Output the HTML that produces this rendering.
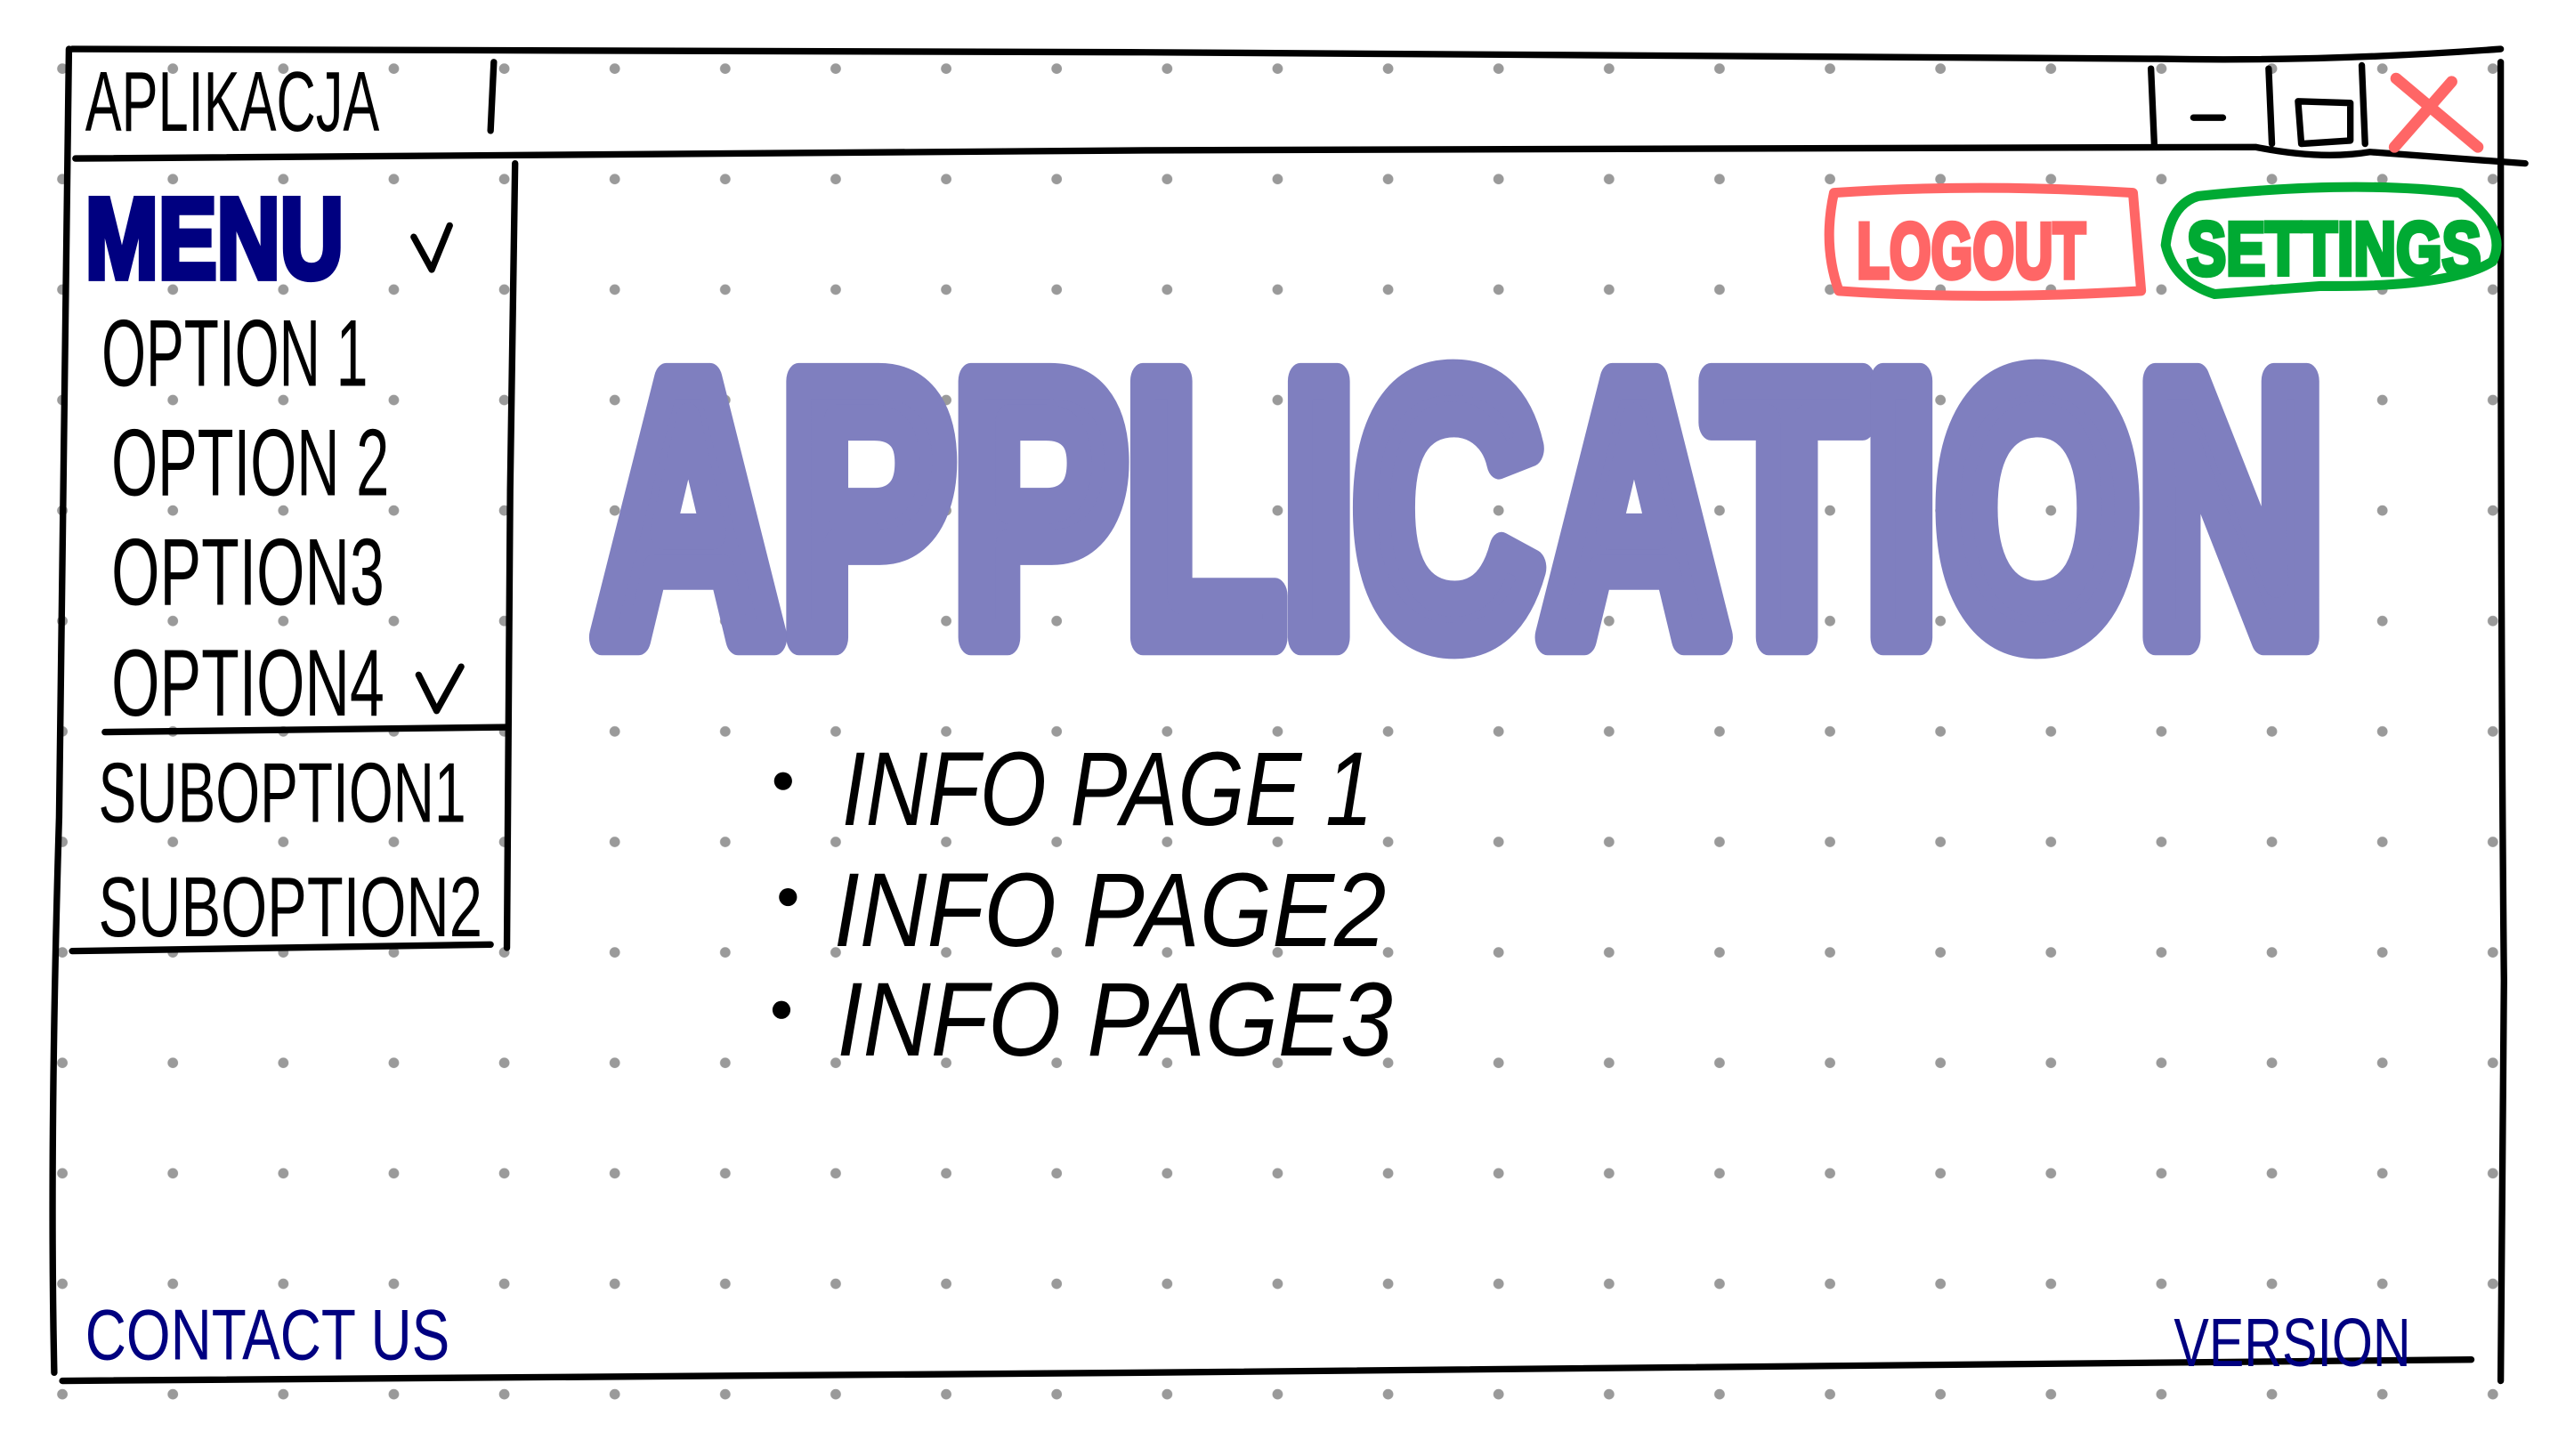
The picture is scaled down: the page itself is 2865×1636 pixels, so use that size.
<!DOCTYPE html>
<html><head><meta charset="utf-8"><style>
html,body{margin:0;padding:0;background:#fff;overflow:hidden}
svg{display:block}
text{font-family:"Liberation Sans",sans-serif}
</style></head><body>
<svg width="2865" height="1636" viewBox="0 0 1560 891" xmlns="http://www.w3.org/2000/svg">
<defs>
<pattern id="dots" x="4" y="8" width="67.6" height="67.6" patternUnits="userSpaceOnUse">
<circle cx="34" cy="34" r="3.2" fill="#9a9a9a"/>
</pattern>
</defs>
<rect width="1560" height="891" fill="#fff"/>
<rect width="1560" height="891" fill="url(#dots)"/>
<g fill="none" stroke="#000" stroke-width="4" stroke-linecap="round" stroke-linejoin="round">
<path d="M42 30 Q38 300 36 500 Q30 700 33 840"/>
<path d="M44 30 L700 32 L1320 36 Q1420 38 1530 30"/>
<path d="M46 97 L700 92 L1380 90 Q1420 98 1450 93 L1545 100"/>
<path d="M1530 38 Q1530 400 1532 600 L1530 845"/>
<path d="M38 845 L700 840 L1512 832"/>
<path d="M302 38 L300 80"/>
<path d="M1316 42 L1318 88"/>
<path d="M1342 72 L1360 72"/>
<path d="M1388 42 L1390 88"/>
<path d="M1406 62 L1408 88 L1438 86 L1438 63 Z"/>
<path d="M1445 40 L1447 88"/>
<path d="M315 100 L312 300 L310 580"/>
<path d="M64 448 L310 445"/>
<path d="M44 582 L300 578"/>
<path d="M253 145 L264 165 L275 138"/>
<path d="M256 413 L267 435 L282 408"/>
</g>
<path d="M1466 48 L1516 90 M1500 50 L1465 90" stroke="#ff6666" stroke-width="7" stroke-linecap="round" fill="none"/>
<path d="M1122 118 Q1210 112 1305 118 L1310 178 Q1210 184 1125 178 Q1115 150 1122 118 Z" fill="none" stroke="#ff6666" stroke-width="6" stroke-linejoin="round"/>
<path d="M1345 120 Q1440 110 1505 118 Q1535 140 1525 160 Q1500 176 1420 175 L1355 180 Q1330 172 1325 150 Q1328 125 1345 120 Z" fill="none" stroke="#00aa33" stroke-width="6" stroke-linejoin="round"/>
<text x="1136" y="170" font-size="48" font-weight="bold" fill="#ff6666" stroke="#ff6666" stroke-width="3" textLength="140" lengthAdjust="spacingAndGlyphs">LOGOUT</text>
<text x="1338" y="168" font-size="46" font-weight="bold" fill="#00aa33" stroke="#00aa33" stroke-width="3" textLength="180" lengthAdjust="spacingAndGlyphs">SETTINGS</text>
<text x="52" y="80" font-size="52" fill="#000" textLength="180" lengthAdjust="spacingAndGlyphs">APLIKACJA</text>
<text x="52" y="170" font-size="70" font-weight="bold" fill="#000080" stroke="#000080" stroke-width="4" textLength="158" lengthAdjust="spacingAndGlyphs">MENU</text>
<g fill="#000" font-size="58">
<text x="62" y="236" textLength="163" lengthAdjust="spacingAndGlyphs">OPTION 1</text>
<text x="68" y="303" textLength="170" lengthAdjust="spacingAndGlyphs">OPTION 2</text>
<text x="68" y="370" textLength="167" lengthAdjust="spacingAndGlyphs">OPTION3</text>
<text x="68" y="438" textLength="167" lengthAdjust="spacingAndGlyphs">OPTION4</text>
<text x="60" y="503" font-size="52" textLength="225" lengthAdjust="spacingAndGlyphs">SUBOPTION1</text>
<text x="60" y="573" font-size="52" textLength="235" lengthAdjust="spacingAndGlyphs">SUBOPTION2</text>
</g>
<text x="364" y="390" font-size="228" font-weight="bold" fill="#7f7fbf" stroke="#7f7fbf" stroke-width="22" stroke-linejoin="round" textLength="1058" lengthAdjust="spacingAndGlyphs">APPLICATION</text>
<circle cx="479" cy="478" r="5.5" fill="#000"/>
<circle cx="482" cy="549" r="5.5" fill="#000"/>
<circle cx="478" cy="618" r="5.5" fill="#000"/>
<g fill="#000" font-size="64" font-style="italic">
<text x="515" y="505" textLength="325" lengthAdjust="spacingAndGlyphs">INFO PAGE 1</text>
<text x="510" y="579" textLength="338" lengthAdjust="spacingAndGlyphs">INFO PAGE2</text>
<text x="512" y="646" textLength="340" lengthAdjust="spacingAndGlyphs">INFO PAGE3</text>
</g>
<text x="52" y="832" font-size="44" fill="#000080" textLength="223" lengthAdjust="spacingAndGlyphs">CONTACT US</text>
<text x="1330" y="836" font-size="42" fill="#000080" textLength="145" lengthAdjust="spacingAndGlyphs">VERSION</text>
</svg>
</body></html>
